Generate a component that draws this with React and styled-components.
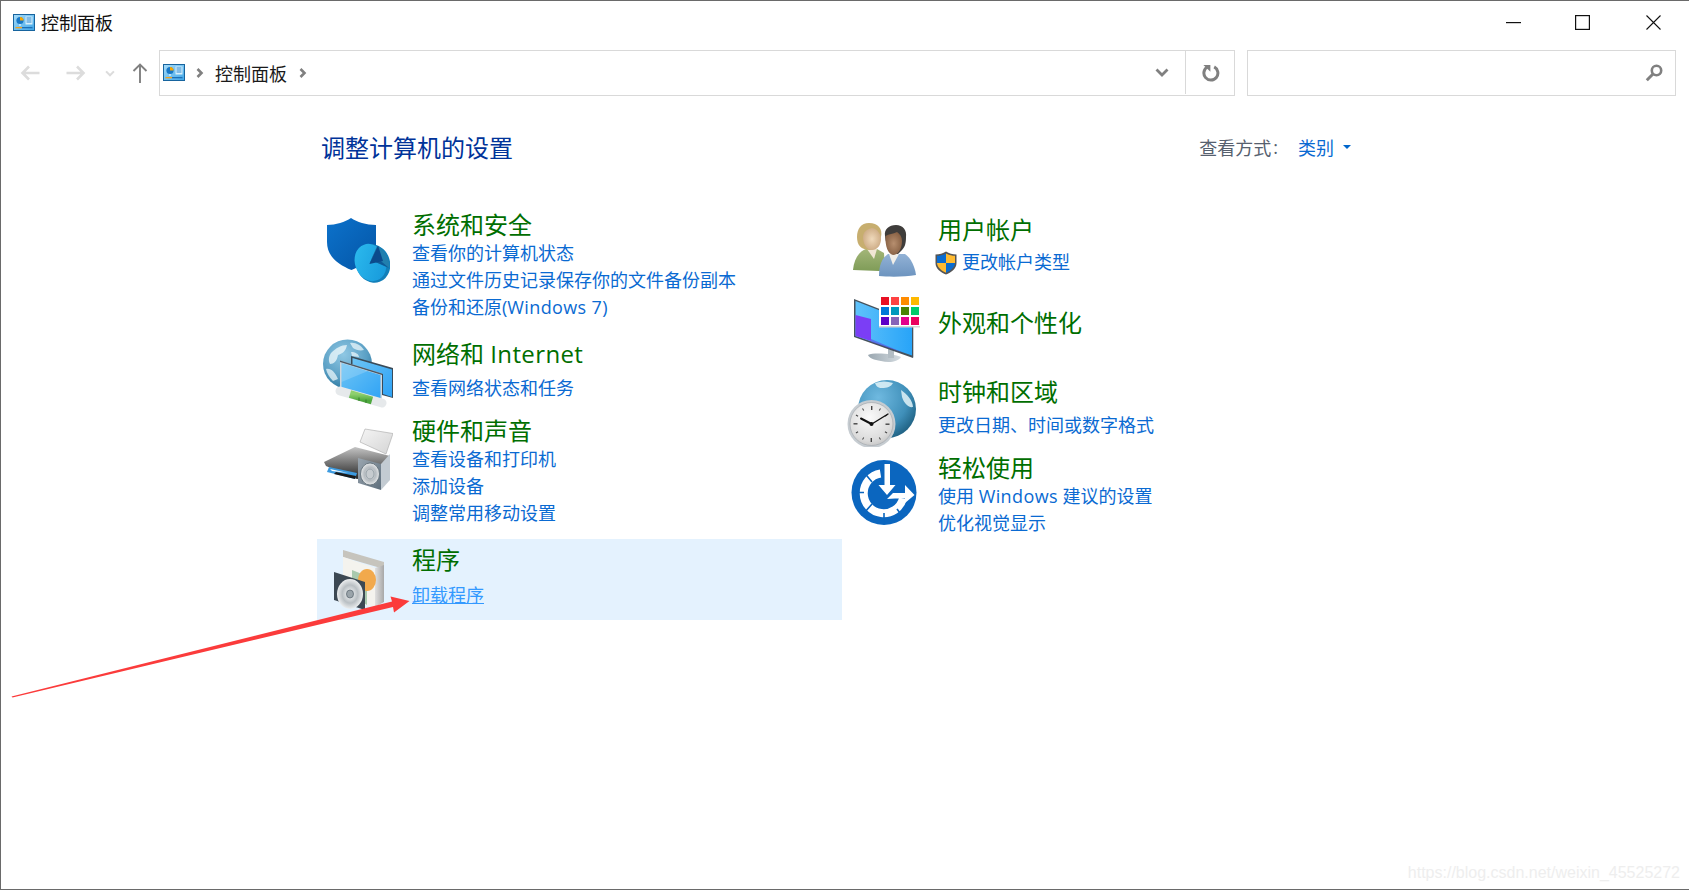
import React from "react";
import styled, { createGlobalStyle } from "styled-components";

const Global = createGlobalStyle`
  html, body { margin: 0; padding: 0; background: #fff; }
  * { box-sizing: border-box; }
`;

const FONT = `"Open Sans", "Noto Sans CJK SC", sans-serif`;

/* Bits of the desktop that show through the window's top edge: [from, to, colour]. */
const EDGE = [
  [948, 958, "#a04a3a"], [990, 992, "#333"], [1121, 1134, "#b07a20"], [1134, 1144, "#a04a3a"],
  [1179, 1194, "#7a8ea0"], [1230, 1255, "#2a6a9a"], [1288, 1310, "#333"], [1348, 1360, "#1a7a2a"],
  [1401, 1418, "#2a8a6a"], [1451, 1479, "#6a1a2a"], [1514, 1529, "#444"], [1564, 1584, "#333"],
];
const EDGE_GRADIENT = EDGE.map(
  ([a, b, c]) => `#6a6a6a ${a}px, ${c} ${a}px, ${c} ${b}px, #6a6a6a ${b}px`
).join(", ");

const Win = styled.div`
  width: 1689px; height: 890px; position: relative; overflow: hidden;
  background: #fff; font-family: ${FONT};
  border-left: 1px solid #6a6a6a; border-top: 1px solid #6a6a6a; border-bottom: 1px solid #6a6a6a;
`;
const TopEdge = styled.div`
  position: absolute; left: -1px; top: -1px; width: 1689px; height: 1px;
  background: linear-gradient(to right, ${EDGE_GRADIENT});
`;
const TitleBar = styled.div`display: flex; align-items: center; height: 43px; padding: 0 1px 0 12px;`;
const TitleText = styled.span`font-size: 18px; color: #111; margin: 0 0 2px 6px; flex: 1;`;
const WinButton = styled.div`width: ${p => p.$w}px; height: 43px; display: flex; align-items: center; justify-content: center;`;

const Toolbar = styled.div`display: flex; align-items: stretch; height: 46px; margin-top: 6px;`;
const Nav = styled.div`width: 158px; padding-left: 6px; display: flex; align-items: center;`;
const NavButton = styled.div`width: ${p => p.$w}px; display: flex; align-items: center; justify-content: center;`;
const AddressBar = styled.div`width: 1076px; border: 1.5px solid #d9d9d9; display: flex; align-items: center; padding: 0 0 1px 3px;`;
const Crumb = styled.span`font-size: 18px; color: #1a1a1a;`;
const Spacer = styled.div`flex: 1;`;
const DropButton = styled.div`width: 45px; padding-right: 2px; display: flex; justify-content: center; align-items: center;`;
const RefreshButton = styled.div`width: 49px; height: 100%; padding-left: 2px; border-left: 1.5px solid #d9d9d9; display: flex; justify-content: center; align-items: center;`;
const SearchBox = styled.div`width: 429px; margin-left: 12px; border: 1.5px solid #d9d9d9; display: flex; align-items: center; justify-content: flex-end; padding-right: 12px;`;

const Main = styled.div`padding: 37px 0 0 316px;`;
const Header = styled.div`width: 1034px; height: 30px; display: flex; justify-content: space-between; align-items: center; padding-left: 4px; margin-bottom: 47px;`;
const Heading = styled.h1`margin: 0; font-size: 24px; font-weight: 400; color: #003399; line-height: 30px;`;
const ViewBy = styled.div`display: flex; align-items: center; font-size: 18px; color: #56606e; margin-top: -3px;`;
const Colon = styled.span`margin-left: 2px;`;
const ViewValue = styled.span`color: #0a6ad2; margin-left: 20px;`;
const Caret = styled.span`
  width: 0; height: 0; margin-left: 9px; margin-top: 1px;
  border-left: 4px solid transparent; border-right: 4px solid transparent; border-top: 4px solid #0066cc;
`;
const Columns = styled.div`display: grid; grid-template-columns: 526px 526px; align-items: start;`;
const Column = styled.div`display: flex; flex-direction: column; width: 525px; padding-top: ${p => p.$top || 0}px;`;
const Category = styled.div`
  display: flex; align-items: flex-start; height: ${p => p.$h}px;
  padding-top: ${p => p.$pad || 0}px;
  background: ${p => (p.$active ? "#e4f2fe" : "transparent")};
`;
const IconCell = styled.div`
  width: 95px; flex: none; height: 0;
  margin-top: ${p => p.$mt - (p.$pad || 0)}px; padding-left: ${p => p.$ml}px;
  svg { display: block; }
`;
const Body = styled.div`min-width: 0;`;
const CatTitle = styled.div`font-size: 24px; line-height: 30px; color: #006e00; white-space: nowrap;`;
const LinkList = styled.div`margin-top: ${p => p.$gap || 0}px; display: flex; flex-direction: column;`;
const Link = styled.a`
  display: block; font-size: 18px; line-height: 27.2px; white-space: nowrap;
  color: ${p => (p.$hover ? "#3399ff" : "#0a6ad2")};
  text-decoration: ${p => (p.$hover ? "underline" : "none")};
`;
const Latin = styled.span`letter-spacing: 0.38px;`;
const LinkRow = styled.div`display: flex; align-items: center; margin-left: -3px; gap: 5px;`;
const Overlay = styled.svg`position: absolute; left: -1px; top: -1px; pointer-events: none;`;
const Watermark = styled.div`
  position: absolute; right: 9px; bottom: 7px; font-family: "Liberation Sans", sans-serif;
  font-size: 16px; color: #eeeeee;
`;

const CpIcon = ({ id }) => (
  <svg width="22" height="17" viewBox="0 0 22 17">
    <defs>
      <linearGradient id={id} x1="0" y1="0" x2="1" y2="1">
        <stop offset="0" stopColor="#a9dcf8" /><stop offset="1" stopColor="#3ea6e8" />
      </linearGradient>
    </defs>
    <rect x=".5" y=".5" width="21" height="16" fill={`url(#${id})`} stroke="#17649e" />
    <circle cx="7" cy="6.5" r="3.6" fill="#1878c8" />
    <path d="M7 6.5V2.9a3.6 3.6 0 0 1 3.6 3.6z" fill="#f7a600" />
    <path d="M6 10.5h2v1H6z" fill="#fff" />
    <rect x="12.5" y="2.5" width="7" height="8" fill="#d8f0fc" />
    <path d="M13.5 4h5M13.5 6h5M13.5 8h5" stroke="#2a86cf" />
    <rect x="2.5" y="13" width="6.5" height="1.3" fill="#f2a21e" />
    <rect x="9" y="13" width="10.5" height="1.3" fill="#1f6fb5" />
  </svg>
);

const Min = () => <svg width="15" height="3"><rect y="1" width="15" height="1.2" fill="#111" /></svg>;
const Max = () => <svg width="15" height="15"><rect x=".6" y=".6" width="13.8" height="13.8" fill="none" stroke="#111" strokeWidth="1.2" /></svg>;
const Close = () => <svg width="15" height="15"><path d="M.5.5l14 14M14.5.5l-14 14" stroke="#111" strokeWidth="1.1" /></svg>;
const HArrow = ({ flip, c }) => (
  <svg width="20" height="16" viewBox="0 0 20 16" style={flip ? { transform: "scaleX(-1)" } : undefined}>
    <path d="M9 1.500L2.500 8 9 14.500M2.500 8H19.500" fill="none" stroke={c} strokeWidth="2.6" />
  </svg>
);
const UpArrow = () => (
  <svg width="16" height="20" viewBox="0 0 16 20"><path d="M1.500 8L8 1.500 14.500 8M8 1.500V20" fill="none" stroke="#808080" strokeWidth="1.9" /></svg>
);
const Chevron = () => (
  <svg width="8" height="10" viewBox="0 0 8 10"><path d="M1.500 1L5.500 5 1.500 9" fill="none" stroke="#808080" strokeWidth="2.6" /></svg>
);
const Down = ({ w, h, c }) => (
  <svg width={w} height={h} viewBox="0 0 14 9"><path d="M1.500 1.500L7 7l5.500-5.500" fill="none" stroke={c} strokeWidth="2.8" /></svg>
);
const Refresh = () => (
  <svg width="18" height="18" viewBox="0 0 18 18">
    <path d="M5.400 3A7 7 0 1 0 12.200 2.900" fill="none" stroke="#808080" strokeWidth="3" />
    <path d="M1.400 1h7v6.800z" fill="#808080" />
  </svg>
);
const Magnifier = () => (
  <svg width="18" height="18" viewBox="0 0 18 18">
    <circle cx="11.500" cy="6.500" r="4.700" fill="none" stroke="#808080" strokeWidth="2.6" />
    <path d="M8 10L1.800 16.200" stroke="#808080" strokeWidth="3" />
  </svg>
);

const ShieldIcon = () => (
  <svg width="63" height="65" viewBox="0 0 63 65">
    <defs>
      <linearGradient id="sh" x1="0" y1="0" x2="1" y2="1"><stop offset="0" stopColor="#0c72cb" /><stop offset="1" stopColor="#0455a6" /></linearGradient>
      <linearGradient id="pie" x1="0" y1="0" x2="1" y2="1"><stop offset="0" stopColor="#2dbcef" /><stop offset="1" stopColor="#1596d9" /></linearGradient>
    </defs>
    <path d="M24 0C30 4 39 7 49 7V30C49 41 36 47 24.500 52C12 47 0 39 0 24V7C9 7 18 4 24 0Z" fill="url(#sh)" />
    <ellipse cx="46" cy="45.500" rx="17" ry="19.500" transform="rotate(-20 46 45.500)" fill="#127fb9" />
    <ellipse cx="43.500" cy="44.500" rx="15.500" ry="19" transform="rotate(-20 43.500 44.500)" fill="url(#pie)" />
    <path d="M50 28C55 30 60 36 62 44L62 50L44 42Z" fill="#217fae" />
    <path d="M51 27.500L42.500 45.500L50 41L55 44L62 50L44 42Z" fill="#0e5a98" />
    <path d="M51 27.500L42.500 46L56 43Z" fill="#0b4a8c" />
  </svg>
);

const NetworkIcon = () => (
  <svg width="70" height="69" viewBox="0 0 70 69">
    <defs>
      <radialGradient id="g1" cx=".42" cy=".3" r=".8">
        <stop offset="0" stopColor="#8fc8e4" /><stop offset=".6" stopColor="#5a9fc4" /><stop offset="1" stopColor="#1f6c94" />
      </radialGradient>
      <linearGradient id="scr" x1="0" y1="0" x2="1" y2="1"><stop offset="0" stopColor="#6cc4f5" /><stop offset="1" stopColor="#2ea2f5" /></linearGradient>
      <linearGradient id="tube" x1="0" y1="0" x2="0" y2="1"><stop offset="0" stopColor="#8fd06e" /><stop offset="1" stopColor="#4ea83e" /></linearGradient>
    </defs>
    <circle cx="24.500" cy="25" r="24.500" fill="url(#g1)" />
    <path d="M8 14C13 9 18 6 24 6C23 12 19 15 15 16C14 22 11 25 7 25C5 21 6 17 8 14Z" fill="#eaf6fa" opacity=".8" />
    <path d="M27 4C32 3 38 6 41 11C37 12 33 11 30 9ZM3 30C8 29 12 33 15 40L10 42C6 38 4 34 3 30ZM28 13C32 13 36 15 36 18L29 17Z" fill="#eaf6fa" opacity=".75" />
    <path d="M28 17L70 29V59L59 56V36L28 27Z" fill="#3a4b59" />
    <path d="M29.500 19L69 30.500V58L60 55V35L29.500 26Z" fill="url(#scr)" />
    <path d="M17 21.500L59 34.500V66L17 52Z" fill="#cfd6dc" />
    <path d="M17 21.500L59 34.500V36L17 23Z" fill="#4a5966" />
    <path d="M18.500 24L57.500 36V63L18.500 50.500Z" fill="url(#scr)" />
    <path d="M18.500 24L45 32L18.500 43Z" fill="#fff" opacity=".18" />
    <path d="M17 52L59 64" stroke="#e6e9eb" strokeWidth="9" strokeLinecap="round" />
    <path d="M27 55L49 61.500" stroke="url(#tube)" strokeWidth="8" />
    <path d="M36 58.500V62M43 60.500V64" stroke="#357f2c" strokeWidth="1" />
  </svg>
);

const PrinterIcon = () => (
  <svg width="69" height="62" viewBox="0 0 69 62">
    <defs>
      <linearGradient id="paper" x1="0" y1="0" x2="1" y2="1"><stop offset="0" stopColor="#f5f5f5" /><stop offset="1" stopColor="#d4d4d4" /></linearGradient>
      <linearGradient id="pbody" x1="0" y1="0" x2="0" y2="1"><stop offset="0" stopColor="#c4c4c4" /><stop offset=".55" stopColor="#6c6c6c" /><stop offset="1" stopColor="#262626" /></linearGradient>
      <linearGradient id="box" x1="0" y1="0" x2="1" y2="1"><stop offset="0" stopColor="#9aa6b0" /><stop offset="1" stopColor="#5e6e7c" /></linearGradient>
      <radialGradient id="cone"><stop offset="0" stopColor="#f4f4f4" /><stop offset=".6" stopColor="#b6bcc1" /><stop offset="1" stopColor="#e7e9ea" /></radialGradient>
    </defs>
    <path d="M41 1L69 5.500L62 26L36 14Z" fill="url(#paper)" stroke="#a8a8a8" strokeWidth=".6" />
    <path d="M0 34L31 19L66 28L65 44L33 51L2 38Z" fill="url(#pbody)" />
    <path d="M5 39L33 45L31 51L3 44Z" fill="#3d9be0" />
    <path d="M6 41L24 45L8 43Z" fill="#fff" />
    <path d="M12 44L32 48L31 51L10 46Z" fill="#1a1a1a" />
    <path d="M57 36L66 26V52L57 62Z" fill="#c3cbd2" />
    <path d="M34 30L57 36V62L34 55Z" fill="url(#box)" />
    <ellipse cx="46" cy="46" rx="9.500" ry="11" fill="url(#cone)" stroke="#56646f" strokeWidth=".8" />
    <ellipse cx="46" cy="46" rx="4" ry="5" fill="#c6cbcf" stroke="#7b8890" strokeWidth=".6" />
  </svg>
);

const ProgramIcon = () => (
  <svg width="51" height="60" viewBox="0 0 51 60">
    <defs>
      <linearGradient id="pside" x1="0" y1="0" x2="1" y2="0"><stop offset="0" stopColor="#e0e0e0" /><stop offset="1" stopColor="#a8a8a8" /></linearGradient>
      <radialGradient id="disc"><stop offset="0" stopColor="#8d969c" /><stop offset=".25" stopColor="#dfe3e5" /><stop offset=".6" stopColor="#b9bfc3" /><stop offset="1" stopColor="#eceeef" /></radialGradient>
    </defs>
    <path d="M9 0L50 12V19L9 7Z" fill="#c6c4bd" />
    <path d="M9 7L41 18V57L9 50Z" fill="#f4f3ee" />
    <path d="M41 18L50 15V52L41 57Z" fill="url(#pside)" />
    <path d="M18 20L33 26L33 55L18 45Z" fill="#a9c9ae" />
    <ellipse cx="33" cy="30" rx="9" ry="11" fill="#f2a94c" />
    <path d="M0 22L31 32V60L0 50Z" fill="#3c4853" />
    <ellipse cx="16" cy="44" rx="13" ry="15" fill="url(#disc)" />
    <ellipse cx="16" cy="44" rx="3.500" ry="4" fill="#9aa4aa" stroke="#5f6b73" strokeWidth=".8" />
  </svg>
);

const UsersIcon = () => (
  <svg width="63" height="54" viewBox="0 0 63 54">
    <defs>
      <linearGradient id="wb" x1="0" y1="0" x2="0" y2="1"><stop offset="0" stopColor="#a3b679" /><stop offset="1" stopColor="#7f9c58" /></linearGradient>
      <linearGradient id="mb" x1="0" y1="0" x2="0" y2="1"><stop offset="0" stopColor="#92b2d6" /><stop offset="1" stopColor="#6d94bf" /></linearGradient>
      <radialGradient id="wf"><stop offset="0" stopColor="#efd9bb" /><stop offset="1" stopColor="#cfae88" /></radialGradient>
      <radialGradient id="mf"><stop offset="0" stopColor="#b78f6f" /><stop offset="1" stopColor="#8a6346" /></radialGradient>
    </defs>
    <path d="M0 47C1 35 7 28 13 26H24L31 30L32 47L26 48Z" fill="url(#wb)" />
    <path d="M14 26L21 36L24 26Z" fill="#f1e6d4" />
    <path d="M16 0C25 0 30 6 28 14C27 20 24 26 17 27C8 27 4 22 4 14C4 6 8 0 16 0Z" fill="#c7ae6f" />
    <path d="M19 5C25 6 28 12 28 16C28 21 25 27 19 27C13 27 10 20 10 14C10 9 14 6 19 5Z" fill="url(#wf)" />
    <path d="M26 53C26 42 29 35 35 31H52C58 35 62 44 63 52C52 54 36 54 26 53Z" fill="url(#mb)" />
    <path d="M36 31H46L40 42Z" fill="#f0eee8" />
    <path d="M32 13C31 6 36 2 43 2C50 2 54 7 53 14C53 20 52 24 49 27L45 31C38 31 33 24 32 13Z" fill="#3f3d3b" />
    <path d="M32.500 13C36 11 40 11 44 9C47 11 49 14 49 18C49 26 45 32 40 32C35 31 32 23 32.500 13Z" fill="url(#mf)" />
  </svg>
);

const UacShield = () => (
  <svg width="22" height="24" viewBox="0 0 22 24">
    <path d="M11 .5C14 2.500 17.500 3.500 21.500 3.500V12C21.500 18 16 21.500 11 23.500C6 21.500 .5 18 .5 12V3.500C4.500 3.500 8 2.500 11 .5Z" fill="#555" />
    <path d="M11 2.500V12H2V4.800C5 4.800 8.500 4 11 2.500Z" fill="#0a6cd0" />
    <path d="M11 2.500C13.500 4 17 4.800 20 4.800V12H11Z" fill="#ffbb30" />
    <path d="M2 12H11V21.800C7 20 2.500 17 2 12Z" fill="#ffbb30" />
    <path d="M11 12H20C19.500 17 15 20 11 21.800Z" fill="#0a6cd0" />
  </svg>
);

const COLORS = [
  ["#e81123", "#ff4343", "#ff8c00", "#ffb900"],
  ["#0078d7", "#0099bc", "#498205", "#00cc6a"],
  ["#5c00c7", "#8764b8", "#e3008c", "#ea005e"],
];

const AppearanceIcon = () => (
  <svg width="66" height="68" viewBox="0 0 66 68">
    <defs>
      <linearGradient id="dsk" x1="0" y1="0" x2="1" y2="0"><stop offset="0" stopColor="#5fc2fb" /><stop offset="1" stopColor="#28a4f8" /></linearGradient>
      <linearGradient id="stand" x1="0" y1="0" x2="1" y2="0"><stop offset="0" stopColor="#9aa7b0" /><stop offset="1" stopColor="#d5dce1" /></linearGradient>
    </defs>
    <path d="M14 60C20 57 40 59 47 62C44 67 35 68 27 66C20 65 15 63 14 60Z" fill="url(#stand)" />
    <path d="M34 52H40V63H34Z" fill="#b3bdc4" />
    <path d="M0 4L59 27V63L0 42Z" fill="#46525c" />
    <path d="M59 27L60 27V62L59 63Z" fill="#c6ced4" />
    <path d="M1.500 6L58 28V60.500L1.500 41Z" fill="url(#dsk)" />
    <path d="M1.500 20L17 24V46L1.500 41Z" fill="#7b3ef5" />
    <path d="M17 44L50 58L17 47Z" fill="#5b3ae0" opacity=".5" />
    <rect x="25" y="0" width="41" height="32" fill="#fff" />
    <rect x="25" y="31" width="41" height="1.500" fill="#d4d4d4" />
    {COLORS.map((row, r) =>
      row.map((c, i) => <rect key={c} x={27 + i * 10} y={2 + r * 10} width="8" height="8" fill={c} />)
    )}
  </svg>
);

const TICKS = [0, 30, 60, 90, 120, 150, 180, 210, 240, 270, 300, 330];
const ClockIcon = () => (
  <svg width="69" height="67" viewBox="0 0 69 67">
    <defs>
      <radialGradient id="g2" cx=".35" cy=".3" r=".85">
        <stop offset="0" stopColor="#6fb9e0" /><stop offset=".6" stopColor="#3f8fb9" /><stop offset="1" stopColor="#134f6d" />
      </radialGradient>
      <radialGradient id="face" cx=".45" cy=".35" r=".75"><stop offset="0" stopColor="#fafafa" /><stop offset=".7" stopColor="#dcdcdc" /><stop offset="1" stopColor="#bcbcbc" /></radialGradient>
    </defs>
    <circle cx="40" cy="29" r="29" fill="url(#g2)" />
    <path d="M28 3C34 1 40 1 46 3C44 7 40 8 35 8C31 8 29 6 28 3ZM54 10C60 14 66 21 66 27C61 28 57 23 55 17Z" fill="#e3f3f8" opacity=".85" />
    <circle cx="24.500" cy="44" r="24" fill="#c6ccd1" />
    <circle cx="24.500" cy="44" r="21.500" fill="url(#face)" stroke="#9da3a8" strokeWidth=".6" />
    {TICKS.map(a => (
      <rect key={a} x="24" y="26" width={a % 90 === 0 ? 1.4 : 1} height={a % 90 === 0 ? 4 : 2.5} fill="#444" transform={`rotate(${a} 24.500 44)`} />
    ))}
    <path d="M24.500 44L14 38.500" stroke="#111" strokeWidth="2" strokeLinecap="round" />
    <path d="M24 44.500L41 34" stroke="#111" strokeWidth="1.400" strokeLinecap="round" />
    <circle cx="24.500" cy="44" r="2" fill="#111" />
  </svg>
);

const EaseIcon = () => (
  <svg width="66" height="65" viewBox="0 0 66 65">
    <circle cx="33" cy="32.500" r="32.500" fill="#0b66bf" />
    <path d="M29.500 13.500A20 20 0 1 0 52 38.500" fill="none" stroke="#fff" strokeWidth="8" />
    <path d="M14 13.500L21 22M3 32.500H13M14 52L21 44M33 64V53M46 49L52 57" stroke="#0b66bf" strokeWidth="1.600" />
    <path d="M33.500 4H39V25H44.500L36 35L27.500 25H33.500Z" fill="#fff" />
    <path d="M36 39L42 33H54V25L63.500 35L54 43V38.500H44Z" fill="#fff" />
  </svg>
);

const Annotation = () => (
  <Overlay width="1689" height="890" viewBox="0 0 1689 890">
    <polygon points="11.500,696.500 392,601.500 390.500,596.500 409.500,601 394,612.500 393,607 12.500,697.500" fill="#fb3b3b" />
  </Overlay>
);

export default function App() {
  return (
    <Win>
      <Global />
      <TopEdge />
      <TitleBar>
        <CpIcon id="cp1" />
        <TitleText>控制面板</TitleText>
        <WinButton $w={67}><Min /></WinButton>
        <WinButton $w={71}><Max /></WinButton>
        <WinButton $w={70}><Close /></WinButton>
      </TitleBar>
      <Toolbar>
        <Nav>
          <NavButton $w={46}><HArrow c="#dcdcdc" /></NavButton>
          <NavButton $w={46}><HArrow flip c="#dcdcdc" /></NavButton>
          <NavButton $w={22}><Down w={10} h={7} c="#dcdcdc" /></NavButton>
          <NavButton $w={38}><UpArrow /></NavButton>
        </Nav>
        <AddressBar>
          <CpIcon id="cp2" />
          <NavButton $w={30}><Chevron /></NavButton>
          <Crumb>控制面板</Crumb>
          <NavButton $w={32}><Chevron /></NavButton>
          <Spacer />
          <DropButton><Down w={14} h={9} c="#808080" /></DropButton>
          <RefreshButton><Refresh /></RefreshButton>
        </AddressBar>
        <SearchBox><Magnifier /></SearchBox>
      </Toolbar>
      <Main>
        <Header>
          <Heading>调整计算机的设置</Heading>
          <ViewBy>
            查看方式<Colon>:</Colon>
            <ViewValue>类别</ViewValue>
            <Caret />
          </ViewBy>
        </Header>
        <Columns>
          <Column>
            <Category $h={129}>
              <IconCell $ml={10} $mt={8}><ShieldIcon /></IconCell>
              <Body>
                <CatTitle>系统和安全</CatTitle>
                <LinkList>
                  <Link>查看你的计算机状态</Link>
                  <Link>通过文件历史记录保存你的文件备份副本</Link>
                  <Link>备份和还原(<Latin>Windows 7</Latin>)</Link>
                </LinkList>
              </Body>
            </Category>
            <Category $h={77}>
              <IconCell $ml={6} $mt={0}><NetworkIcon /></IconCell>
              <Body>
                <CatTitle>网络和 <Latin>Internet</Latin></CatTitle>
                <LinkList $gap={6}><Link>查看网络状态和任务</Link></LinkList>
              </Body>
            </Category>
            <Category $h={123}>
              <IconCell $ml={7} $mt={12}><PrinterIcon /></IconCell>
              <Body>
                <CatTitle>硬件和声音</CatTitle>
                <LinkList>
                  <Link>查看设备和打印机</Link>
                  <Link>添加设备</Link>
                  <Link>调整常用移动设置</Link>
                </LinkList>
              </Body>
            </Category>
            <Category $h={81} $pad={6} $active>
              <IconCell $ml={17} $mt={11} $pad={6}><ProgramIcon /></IconCell>
              <Body>
                <CatTitle>程序</CatTitle>
                <LinkList $gap={7}><Link $hover>卸载程序</Link></LinkList>
              </Body>
            </Category>
          </Column>
          <Column $top={5}>
            <Category $h={93}>
              <IconCell $ml={10} $mt={8}><UsersIcon /></IconCell>
              <Body>
                <CatTitle>用户帐户</CatTitle>
                <LinkList $gap={4}>
                  <LinkRow><UacShield /><Link>更改帐户类型</Link></LinkRow>
                </LinkList>
              </Body>
            </Category>
            <Category $h={69}>
              <IconCell $ml={11} $mt={-13}><AppearanceIcon /></IconCell>
              <Body><CatTitle>外观和个性化</CatTitle></Body>
            </Category>
            <Category $h={76}>
              <IconCell $ml={4} $mt={3}><ClockIcon /></IconCell>
              <Body>
                <CatTitle>时钟和区域</CatTitle>
                <LinkList $gap={5}><Link>更改日期、时间或数字格式</Link></LinkList>
              </Body>
            </Category>
            <Category $h={90}>
              <IconCell $ml={8} $mt={7}><EaseIcon /></IconCell>
              <Body>
                <CatTitle>轻松使用</CatTitle>
                <LinkList>
                  <Link>使用 <Latin>Windows</Latin> 建议的设置</Link>
                  <Link>优化视觉显示</Link>
                </LinkList>
              </Body>
            </Category>
          </Column>
        </Columns>
      </Main>
      <Annotation />
      <Watermark>https://blog.csdn.net/weixin_45525272</Watermark>
    </Win>
  );
}
